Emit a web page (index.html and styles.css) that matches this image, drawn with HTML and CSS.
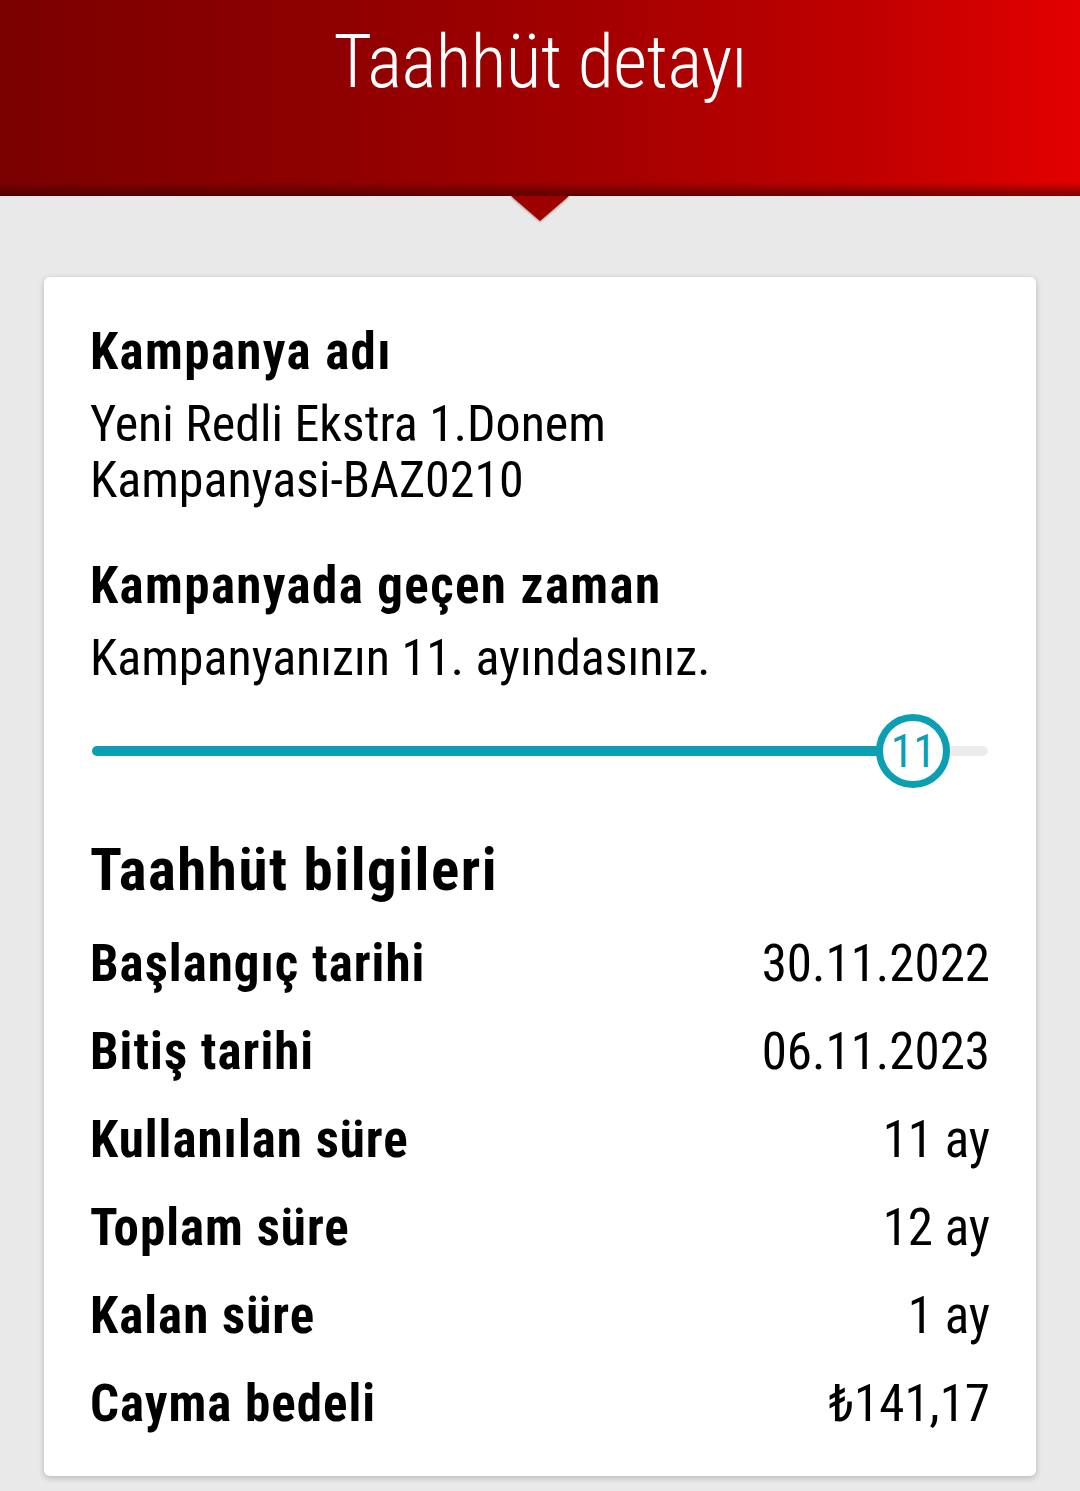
FILE: index.html
```html
<!DOCTYPE html>
<html lang="tr">
  <head>
    <meta charset="utf-8">
    <title>Taahhüt detayı</title>
    <link rel="stylesheet" href="styles.css">
  </head>
  <body>
    <header class="topbar">
      <h1 class="topbar-title">Taahhüt detayı</h1>
    </header>

    <main class="page">
      <div class="card">
        <div class="field">
          <div class="field-label">Kampanya adı</div>
          <div class="field-value">Yeni Redli Ekstra 1.Donem<br>Kampanyasi-BAZ0210</div>
        </div>

        <div class="field">
          <div class="field-label">Kampanyada geçen zaman</div>
          <div class="field-value">Kampanyanızın 11. ayındasınız.</div>
        </div>

        <div class="progress">
          <div class="progress-track">
            <div class="progress-fill" style="width: 91.67%"></div>
            <div class="progress-thumb" style="left: 91.67%">11</div>
          </div>
        </div>

        <h2 class="section-title">Taahhüt bilgileri</h2>
        <div class="info-list">
          <div class="info-row">
            <span class="info-label">Başlangıç tarihi</span>
            <span class="info-value">30.11.2022</span>
          </div>
          <div class="info-row">
            <span class="info-label">Bitiş tarihi</span>
            <span class="info-value">06.11.2023</span>
          </div>
          <div class="info-row">
            <span class="info-label">Kullanılan süre</span>
            <span class="info-value">11 ay</span>
          </div>
          <div class="info-row">
            <span class="info-label">Toplam süre</span>
            <span class="info-value">12 ay</span>
          </div>
          <div class="info-row">
            <span class="info-label">Kalan süre</span>
            <span class="info-value">1 ay</span>
          </div>
          <div class="info-row">
            <span class="info-label">Cayma bedeli</span>
            <span class="info-value">₺141,17</span>
          </div>
        </div>
      </div>
    </main>
  </body>
</html>
```
FILE: styles.css
```css
body {
  margin: 0;
  padding: 0;
  background-color: #e9e9e9;
  font-family: "Roboto Condensed", Roboto, "Noto Sans", sans-serif;
  color: #000;
}

/* red header with the little arrow under it */
.topbar {
  position: relative;
  height: 196px;
  background:
    linear-gradient(180deg, rgba(0, 0, 0, 0) calc(100% - 14px), rgba(40, 0, 0, 0.55) 100%),
    linear-gradient(90deg, #7b0000 0%, #8e0000 30%, #a30000 55%, #c00000 80%, #e30000 100%);
}

.topbar::after {
  content: "";
  position: absolute;
  left: 50%;
  top: 196px;
  margin-left: -29px;
  border-left: 29px solid transparent;
  border-right: 29px solid transparent;
  border-top: 25px solid #9e0000;
  filter: drop-shadow(0 1px 1px rgba(60, 0, 0, 0.4));
}

.topbar-title {
  margin: 0;
  padding-top: 17px;
  line-height: 90px;
  font-size: 74px;
  font-weight: 300;
  letter-spacing: -0.6px;
  color: #fff;
  text-align: center;
}

.page {
  padding: 81px 44px 40px;
}

.card {
  background-color: #fff;
  border-radius: 6px;
  box-shadow: 0 2px 6px rgba(0, 0, 0, 0.22);
  padding: 45px 46px 28px;
}

.field + .field {
  margin-top: 48px;
}

.field-label {
  font-size: 51px;
  font-weight: 700;
  line-height: 60px;
  letter-spacing: 1.4px;
}

.field-value {
  margin-top: 14px;
  font-size: 50px;
  line-height: 56px;
}

/* progress bar */
.progress {
  margin-top: 28px;
  height: 74px;
  display: flex;
  align-items: center;
  padding: 0 2px;
}

.progress-track {
  position: relative;
  flex: 1;
  height: 10px;
  border-radius: 5px;
  background-color: #ececec;
}

.progress-fill {
  height: 100%;
  border-radius: 5px;
  background-color: #0b9fb4;
}

.progress-thumb {
  position: absolute;
  top: 50%;
  width: 60px;
  height: 60px;
  margin: -37px 0 0 -37px;
  border: 7px solid #0b9fb4;
  border-radius: 50%;
  background-color: #fff;
  color: #0b9fb4;
  font-size: 46px;
  line-height: 60px;
  text-align: center;
}

.section-title {
  margin: 47px 0 0;
  font-size: 59px;
  font-weight: 700;
  line-height: 70px;
  letter-spacing: 1.5px;
}

.info-list {
  margin-top: 15px;
}

.info-row {
  display: flex;
  justify-content: space-between;
  height: 88px;
  line-height: 88px;
  font-size: 51px;
}

.info-label {
  font-weight: 700;
  letter-spacing: 1px;
}
```
